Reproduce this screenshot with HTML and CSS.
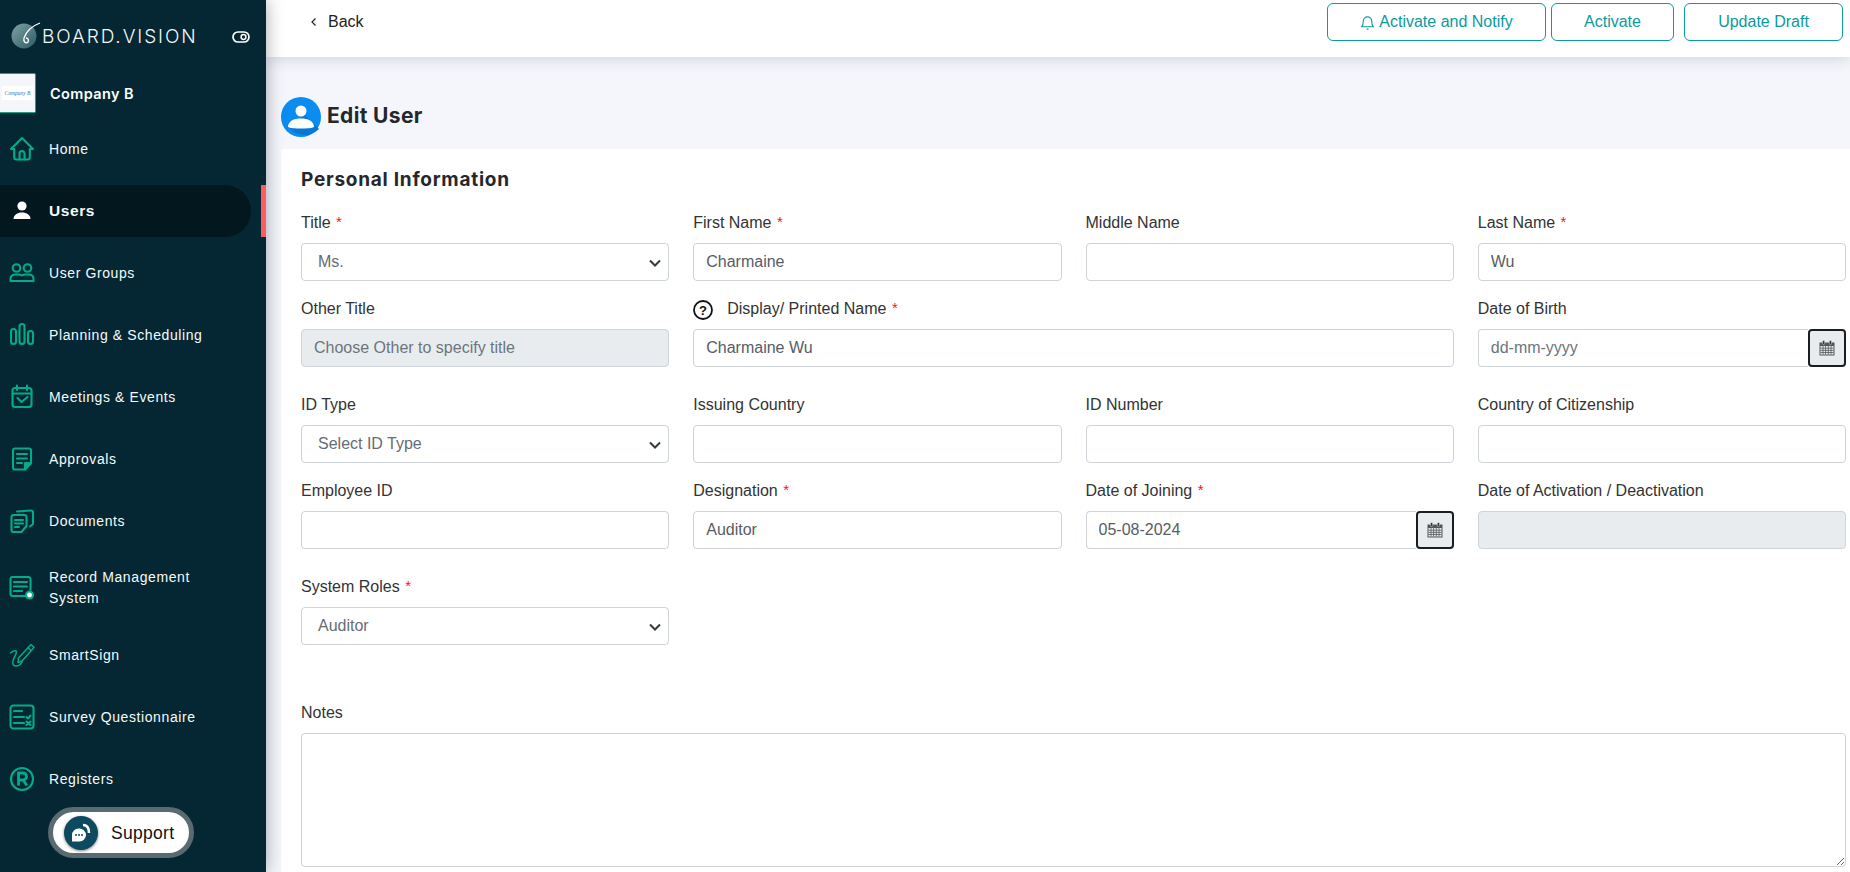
FILE: index.html
```html
<!DOCTYPE html>
<html lang="en">
<head>
<meta charset="utf-8">
<title>Edit User</title>
<link rel="stylesheet" href="styles.css">
</head>
<body>
<div class="app">
  <aside class="sidebar">
    <div class="brand">
      <svg class="brand-mark" viewBox="0 0 36 36" width="36" height="36">
        <defs><linearGradient id="bm" x1="0" y1="0" x2="1" y2="1"><stop offset="0" stop-color="#7fa3a6"/><stop offset="1" stop-color="#2c5a63"/></linearGradient></defs>
        <circle cx="16" cy="18" r="12.5" fill="url(#bm)"/>
        <path d="M32 5C24 8 18 14 16 20c-1 4 2 6 4 4 1-2 0-4-2-4" fill="none" stroke="#fff" stroke-width="1.3"/>
      </svg>
      <span class="brand-name">BOARD.VISION</span>
      <svg class="brand-toggle" viewBox="0 0 18 12" width="18" height="12"><rect x="1" y="1" width="16" height="10" rx="5" fill="none" stroke="#fff" stroke-width="1.7"/><circle cx="11.5" cy="6" r="2.4" fill="none" stroke="#fff" stroke-width="1.5"/></svg>
    </div>
    <div class="company">
      <div class="company-logo"><span class="company-logo-text">Company B</span></div>
      <span class="company-name">Company B</span>
    </div>
    <nav class="nav">
      <a class="nav-item"><svg class="nav-icon" viewBox="0 0 26 26"><path d="M13 2 2 13h3.2v8.5a2 2 0 0 0 2 2h11.6a2 2 0 0 0 2-2V13H24Z"/><path d="M10.500 23.500v-6a2.500 2.500 0 0 1 5 0v6"/></svg><span>Home</span></a>
      <a class="nav-item nav-item-active"><svg class="nav-icon nav-icon-solid" viewBox="0 0 26 26"><circle cx="13" cy="9" r="4.600"/><path d="M4.500 22c0-4 4-6.500 8.500-6.500s8.500 2.500 8.500 6.500Z"/></svg><span>Users</span></a>
      <a class="nav-item"><svg class="nav-icon" viewBox="0 0 26 26"><circle cx="7.500" cy="8" r="3.800"/><circle cx="18.500" cy="8" r="3.800"/><path d="M1.500 19c0-3 2-4.500 5-4.500h3c2 0 3.500 1 3.500 1s1.500-1 3.500-1h3c3 0 5 1.500 5 4.500v2h-23Z"/></svg><span>User Groups</span></a>
      <a class="nav-item"><svg class="nav-icon" viewBox="0 0 26 26"><rect x="2" y="7" width="5" height="15" rx="2.500"/><rect x="10.500" y="2" width="5" height="20" rx="2.500"/><rect x="19" y="9" width="5" height="13" rx="2.500"/></svg><span>Planning &amp; Scheduling</span></a>
      <a class="nav-item"><svg class="nav-icon" viewBox="0 0 26 26"><rect x="3.500" y="4" width="19" height="19" rx="2.500"/><path d="M3.500 9.500h19M8 1.500V6M18 1.500V6M8.500 14l4 4 6-5"/></svg><span>Meetings &amp; Events</span></a>
      <a class="nav-item"><svg class="nav-icon" viewBox="0 0 26 26"><path d="M6 2.500h14a2 2 0 0 1 2 2V17l-6 6.500H6a2 2 0 0 1-2-2v-17a2 2 0 0 1 2-2Z"/><path d="M8 8h10M8 12.500h10M8 17h5"/><path class="fold" d="M22 17h-6v6.500Z"/></svg><span>Approvals</span></a>
      <a class="nav-item"><svg class="nav-icon" viewBox="0 0 26 26"><path d="M4.500 7h11a2 2 0 0 1 2 2v9l-5 6h-8a2 2 0 0 1-2-2V9a2 2 0 0 1 2-2Z"/><path d="M6 12h8M6 15.500h8M6 19h4M8 3.500 22 2.500a2 2 0 0 1 2 1.500v12l-3 2.500"/></svg><span>Documents</span></a>
      <a class="nav-item nav-item-tall"><svg class="nav-icon" viewBox="0 0 26 26"><path d="M21.500 15V4a2 2 0 0 0-2-2h-16a2 2 0 0 0-2 2v15a2 2 0 0 0 2 2h13"/><path d="M5 7h13M5 11.500h13M5 16h8"/><circle class="dot" cx="20.500" cy="20" r="3.500"/></svg><span>Record Management<br>System</span></a>
      <a class="nav-item"><svg class="nav-icon nav-icon-thin" viewBox="0 0 26 26"><path d="M22 2.500 25 5.500 13 19l-4 1.500.5-4.500Z"/><path d="M19 5.500 22 8.500M1.500 11C6 7.500 9 8 6.500 13 3 19 2.500 24 7 24c3 0 5-2 6-4"/></svg><span>SmartSign</span></a>
      <a class="nav-item"><svg class="nav-icon" viewBox="0 0 26 26"><rect x="1.500" y="1.500" width="23" height="23" rx="3"/><path d="M5 7h8M5 13h10M5 19h10M17.500 13l1.500 1.500 2.500-3M17.500 17.500l4 3.500M21.500 17.500l-4 3.500"/></svg><span>Survey Questionnaire</span></a>
      <a class="nav-item"><svg class="nav-icon" viewBox="0 0 26 26"><circle cx="13" cy="13" r="11"/><path class="thick" d="M9.500 19.500V7h4.500a3.500 3.500 0 0 1 0 7H9.500M14 14l4 5.500"/></svg><span>Registers</span></a>
    </nav>
    <div class="support">
      <span class="support-badge"><svg viewBox="0 0 34 34" width="34" height="34"><path d="M8 19a6.500 6.500 0 0 1 6.500-6.500h1a6.500 6.500 0 0 1 0 13H8Z" fill="#fff"/><circle cx="12" cy="19" r="1" fill="#0d4a5f"/><circle cx="15" cy="19" r="1" fill="#0d4a5f"/><circle cx="18" cy="19" r="1" fill="#0d4a5f"/><path d="M19 9c4 0 6 3 6 8" fill="none" stroke="#fff" stroke-width="2.500"/></svg></span>
      <span class="support-text">Support</span>
    </div>
  </aside>
  <main class="main">
    <header class="topbar">
      <a class="back"><svg viewBox="0 0 8 10" width="8" height="10"><path d="M5.500 1.500 2 5l3.500 3.500" fill="none" stroke="#222" stroke-width="1.200"/></svg><span>Back</span></a>
      <div class="actions">
        <button class="btn btn-notify"><svg viewBox="0 0 16 18" width="15" height="17"><path d="M2 13.500c1.500-1.500 1.500-3 1.500-6a4.500 4.500 0 0 1 9 0c0 3 0 4.500 1.500 6ZM1 13.500h14M7 16h2" fill="none" stroke="#0a9aa0" stroke-width="1.200"/></svg>Activate and Notify</button>
        <button class="btn btn-activate">Activate</button>
        <button class="btn btn-draft">Update Draft</button>
      </div>
    </header>
    <div class="title-band">
      <svg class="title-icon" viewBox="0 0 40 40" width="40" height="40"><circle cx="20" cy="20" r="20" fill="#0a8cf0"/><path d="M7 29 24 18l14 14a20 20 0 0 1-31-3Z" fill="#0877d6"/><circle cx="20" cy="14" r="5.500" fill="#fff"/><path d="M7 30c0-6 6-8.500 13-8.500S33 24 33 30c-3 2-23 2-26 0Z" fill="#fff"/></svg>
      <h1 class="title">Edit User</h1>
    </div>
    <section class="card">
      <h2 class="section-title">Personal Information</h2>
      <div class="form-row">
        <div class="field"><label class="label">Title <sup class="req">*</sup></label><div class="select-wrap"><select class="control select"><option>Ms.</option></select><svg class="chevron" viewBox="0 0 12 8" width="12" height="8"><path d="M1 1.500 6 6.500l5-5" fill="none" stroke="#343a40" stroke-width="2"/></svg></div></div>
        <div class="field"><label class="label">First Name <sup class="req">*</sup></label><input class="control" value="Charmaine"></div>
        <div class="field"><label class="label">Middle Name</label><input class="control"></div>
        <div class="field"><label class="label">Last Name <sup class="req">*</sup></label><input class="control" value="Wu"></div>
      </div>
      <div class="form-row form-row-spaced">
        <div class="field"><label class="label">Other Title</label><input class="control control-disabled" placeholder="Choose Other to specify title"></div>
        <div class="field field-span"><label class="label"><svg class="help" viewBox="0 0 20 20" width="20" height="20"><circle cx="10" cy="10" r="9" fill="none" stroke="#111" stroke-width="1.800"/><text x="10" y="14.500" text-anchor="middle" class="help-text">?</text></svg>Display/ Printed Name <sup class="req">*</sup></label><input class="control" value="Charmaine Wu"></div>
        <div class="field"><label class="label">Date of Birth</label><div class="date"><input class="control date-input" placeholder="dd-mm-yyyy"><button class="date-btn"><svg viewBox="0 0 16 16" width="16" height="16"><path d="M.5 2.500h15v13H.5Z" fill="#555"/><path d="M1.500 6h13v8.500h-13Z" fill="#e9ecef"/><path d="M1.500 8.200h13M1.500 10.400h13M1.500 12.500h13M4 6v8.500M6.600 6v8.500M9.300 6v8.500M12 6v8.500" stroke="#555" stroke-width=".8"/><rect x="3.500" y=".5" width="2.200" height="4" rx="1.100" fill="#333" stroke="#e9ecef" stroke-width=".5"/><rect x="10.300" y=".5" width="2.200" height="4" rx="1.100" fill="#333" stroke="#e9ecef" stroke-width=".5"/></svg></button></div></div>
      </div>
      <div class="form-row">
        <div class="field"><label class="label">ID Type</label><div class="select-wrap"><select class="control select"><option>Select ID Type</option></select><svg class="chevron" viewBox="0 0 12 8" width="12" height="8"><path d="M1 1.500 6 6.500l5-5" fill="none" stroke="#343a40" stroke-width="2"/></svg></div></div>
        <div class="field"><label class="label">Issuing Country</label><input class="control"></div>
        <div class="field"><label class="label">ID Number</label><input class="control"></div>
        <div class="field"><label class="label">Country of Citizenship</label><input class="control"></div>
      </div>
      <div class="form-row form-row-spaced">
        <div class="field"><label class="label">Employee ID</label><input class="control"></div>
        <div class="field"><label class="label">Designation <sup class="req">*</sup></label><input class="control" value="Auditor"></div>
        <div class="field"><label class="label">Date of Joining <sup class="req">*</sup></label><div class="date"><input class="control date-input" value="05-08-2024"><button class="date-btn"><svg viewBox="0 0 16 16" width="16" height="16"><path d="M.5 2.500h15v13H.5Z" fill="#555"/><path d="M1.500 6h13v8.500h-13Z" fill="#e9ecef"/><path d="M1.500 8.200h13M1.500 10.400h13M1.500 12.500h13M4 6v8.500M6.600 6v8.500M9.300 6v8.500M12 6v8.500" stroke="#555" stroke-width=".8"/><rect x="3.500" y=".5" width="2.200" height="4" rx="1.100" fill="#333" stroke="#e9ecef" stroke-width=".5"/><rect x="10.300" y=".5" width="2.200" height="4" rx="1.100" fill="#333" stroke="#e9ecef" stroke-width=".5"/></svg></button></div></div>
        <div class="field"><label class="label">Date of Activation / Deactivation</label><input class="control control-disabled"></div>
      </div>
      <div class="form-row form-row-roles">
        <div class="field"><label class="label">System Roles <sup class="req">*</sup></label><div class="select-wrap"><select class="control select"><option>Auditor</option></select><svg class="chevron" viewBox="0 0 12 8" width="12" height="8"><path d="M1 1.500 6 6.500l5-5" fill="none" stroke="#343a40" stroke-width="2"/></svg></div></div>
      </div>
      <div class="field">
        <label class="label">Notes</label>
        <textarea class="control notes"></textarea>
      </div>
    </section>
  </main>
</div>
</body>
</html>
```
FILE: styles.css
```css
* { box-sizing: border-box; }
html, body { margin: 0; height: 100%; overflow: hidden; }
body { font-family: "Liberation Sans", Arial, sans-serif; color: #333; background: #f4f6fb; }
.app { display: flex; height: 872px; }

.sidebar { position: relative; z-index: 3; flex: 0 0 266px; background: #052733; color: #fff; box-shadow: 0 0 16px rgba(20, 25, 45, .38); }
.brand { display: flex; align-items: center; height: 73px; padding: 0 0 0 8px; }
.brand-mark { margin-right: -2px; margin-top: -2px; }
.brand-name { font-family: Inter, sans-serif; font-weight: 300; font-size: 19px; letter-spacing: 1.9px; color: #f2f7f8; width: 192px; white-space: nowrap; }
.brand-toggle { margin-left: -2px; }
.company { display: flex; align-items: center; height: 40px; }
.company-logo { width: 36px; height: 40px; background: #f5f6fa; border: 1px solid #07a88e; border-left: 0; border-radius: 0 2px 2px 0; display: flex; align-items: center; justify-content: center; }
.company-logo-text { display: block; background: #fff; color: #2a7bd0; font-size: 5.500px; font-style: italic; font-family: "Liberation Serif", serif; white-space: nowrap; padding: 4px 3px; }
.company-name { margin-left: 14px; font-family: Inter, sans-serif; font-weight: 600; font-size: 14.500px; letter-spacing: .4px; color: #fff; }

.nav { display: flex; flex-direction: column; gap: 10px; padding-top: 10px; }
.nav-item { display: flex; align-items: center; height: 52px; padding-left: 9px; font-size: 14px; line-height: 21px; letter-spacing: .6px; color: #f4fbfb; }
.nav-item > span { margin-left: 14px; }
.nav-item-tall { height: 62px; }
.nav-icon { width: 26px; height: 26px; flex: none; fill: none; stroke: #02ab8e; stroke-width: 2.100; stroke-linejoin: round; stroke-linecap: round; }
.nav-icon-thin { stroke-width: 1.500; }
.nav-icon-solid { fill: #fff; stroke: none; }
.nav-icon .dot { fill: #fff; stroke: #02ab8e; }
.nav-icon .fold { fill: #02ab8e; }
.nav-icon .thick { stroke-width: 2.800; stroke-linecap: butt; }
.nav-item-active { position: relative; width: 251px; background: #03171f; border-radius: 0 26px 26px 0; font-weight: 700; font-size: 15.500px; padding-bottom: 2px; }
.nav-item-active::after { content: ""; position: absolute; left: 261px; top: 0; width: 5px; height: 52px; background: #ff5d5d; }

.support { position: absolute; left: 48px; top: 807px; width: 146px; height: 51px; display: flex; align-items: center; background: #fff; border: 5px solid #596a70; border-radius: 26px; }
.support-badge { width: 34px; height: 34px; margin-left: 11px; border-radius: 50%; background: #0d4a5f; box-shadow: 0 1px 3px rgba(0, 0, 0, .5); }
.support-badge svg { display: block; }
.support-text { margin-left: 13px; padding-top: 2px; font-size: 17.500px; letter-spacing: .3px; color: #111; }

.main { flex: 1; min-width: 0; display: flex; flex-direction: column; }
.topbar { position: relative; z-index: 2; flex: 0 0 57px; height: 57px; background: #fff; display: flex; justify-content: space-between; box-shadow: 0 2px 14px rgba(30, 35, 60, .16); }
.back { display: flex; align-items: center; gap: 10px; height: 44px; padding-left: 44px; font-size: 16px; color: #222; }
.actions { display: flex; padding: 3px 7px 0 0; align-items: flex-start; }
.btn { height: 38px; background: #fff; border: 1px solid #0a9aa0; border-radius: 6px; color: #0a9aa0; font: 16px "Liberation Sans", Arial, sans-serif; padding: 0; display: flex; align-items: center; justify-content: center; gap: 4px; }
.btn-notify { width: 219px; margin-right: 5px; }
.btn-activate { width: 123px; margin-right: 10px; }
.btn-draft { width: 159px; }

.title-band { display: flex; align-items: center; height: 92px; padding: 28px 0 0 15px; gap: 6px; }
.title { margin: 0 0 4px; font: 700 21px Inter, sans-serif; letter-spacing: .35px; color: #24282d; }

.card { flex: 1; margin-left: 15px; padding: 20px 4px 0 20px; background: #fff; border-radius: 3px 0 0 0; }
.section-title { margin: 0 0 21px; font: 700 19px/22px Inter, sans-serif; letter-spacing: .75px; color: #24282d; }
.form-row { display: grid; grid-template-columns: repeat(4, minmax(0, 1fr)); column-gap: 24px; margin-bottom: 17px; }
.form-row-spaced { margin-bottom: 27px; }
.form-row-roles { margin-bottom: 57px; }
.field-span { grid-column: span 2; }
.label { display: flex; align-items: center; height: 21px; margin-bottom: 10px; font-size: 16px; line-height: 21px; color: #333; white-space: pre; }
.req { color: #f01818; font-size: 15px; line-height: 1; align-self: flex-start; margin: 2px 0 0 1px; }
.help { margin: 3px 14px 0 0; flex: none; }
.help-text { font: 700 13px "Liberation Sans", sans-serif; fill: #111; }
.control { display: block; width: 100%; height: 38px; padding: 0 12px; background: #fff; border: 1px solid #ced4da; border-radius: 4px; font: 16px "Liberation Sans", Arial, sans-serif; color: #565d64; outline: none; }
.control::placeholder { color: #6c757d; opacity: 1; }
.control-disabled { background: #e9ecef; }
.select-wrap { position: relative; }
.select { appearance: none; padding: 0 0 2px 16px; color: #666c73; }
.chevron { position: absolute; right: 8px; top: 16px; }
.date { display: flex; }
.date-input { flex: 1; min-width: 0; border-radius: 4px 0 0 4px; border-right: 0; }
.date-btn { flex: 0 0 38px; height: 38px; background: #e9ecef; border: 2px solid #1b1e21; border-radius: 4px; padding: 0; display: flex; align-items: center; justify-content: center; }
.notes { height: 134px; resize: both; padding: 8px 12px; }
```
